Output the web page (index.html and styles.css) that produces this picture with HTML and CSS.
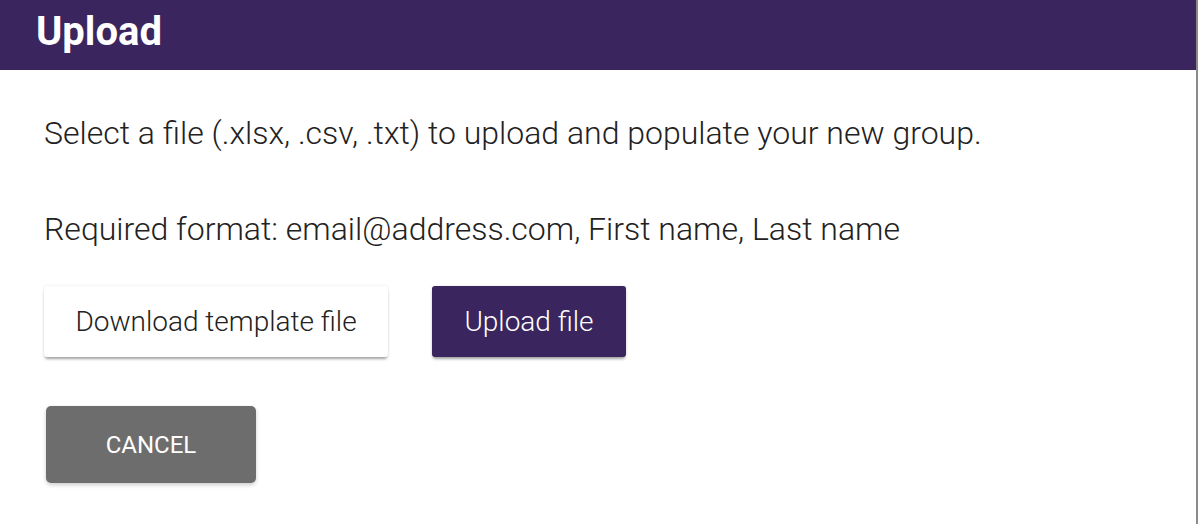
FILE: index.html
```html
<!DOCTYPE html>
<html>
<head>
<meta charset="utf-8">
<link rel="stylesheet" href="styles.css">
</head>
<body>
<div class="page">
  <header class="header"><h1 class="title">Upload</h1></header>
  <main class="content">
    <p class="text">Select a file (.xlsx, .csv, .txt) to upload and populate your new group.</p>
    <p class="text second">Required format: email@address.com, First name, Last name</p>
    <div class="actions">
      <button class="btn btn-light">Download template file</button>
      <button class="btn btn-primary">Upload file</button>
    </div>
    <button class="btn btn-cancel">CANCEL</button>
  </main>
</div>
</body>
</html>
```
FILE: styles.css
```css
html, body {
  margin: 0;
  padding: 0;
  background: #ffffff;
}
body {
  font-family: Roboto, "Liberation Sans", sans-serif;
  width: 1198px;
  height: 524px;
  overflow: hidden;
}
.page {
  width: 1196px;
  height: 524px;
  border-right: 2px solid #8a8a8a;
}
.header {
  background: #3a255e;
  height: 70px;
  display: flex;
  align-items: center;
  padding-left: 36px;
}
.title {
  margin: 0;
  color: #ffffff;
  font-size: 40px;
  font-weight: 700;
  line-height: 1;
  padding-bottom: 6px;
}
.content {
  padding: 44px 44px 0;
}
.text {
  margin: 0;
  font-size: 32px;
  font-weight: 300;
  color: #222222;
  line-height: 38px;
}
.second {
  margin-top: 58px;
}
.actions {
  display: flex;
  gap: 44px;
  margin-top: 38px;
}
.btn {
  border: none;
  font-family: Roboto, "Liberation Sans", sans-serif;
  cursor: pointer;
  padding: 0;
}
.btn-light {
  background: #ffffff;
  color: #222222;
  font-size: 28px;
  font-weight: 300;
  width: 344px;
  height: 71px;
  border-radius: 3px;
  box-shadow: 0 3px 3px -1px rgba(0,0,0,0.35), 0 0 3px rgba(0,0,0,0.1);
}
.btn-primary {
  background: #3a255e;
  color: #ffffff;
  font-size: 28px;
  font-weight: 300;
  width: 194px;
  height: 71px;
  border-radius: 3px;
  box-shadow: 0 3px 3px -1px rgba(0,0,0,0.35), 0 0 3px rgba(0,0,0,0.1);
}
.btn-cancel {
  display: block;
  margin-top: 49px;
  margin-left: 2px;
  background: #6d6d6d;
  color: #ffffff;
  font-size: 24px;
  font-weight: 400;
  width: 210px;
  height: 77px;
  border-radius: 5px;
  box-shadow: 0 2px 4px rgba(0,0,0,0.2);
}
```
